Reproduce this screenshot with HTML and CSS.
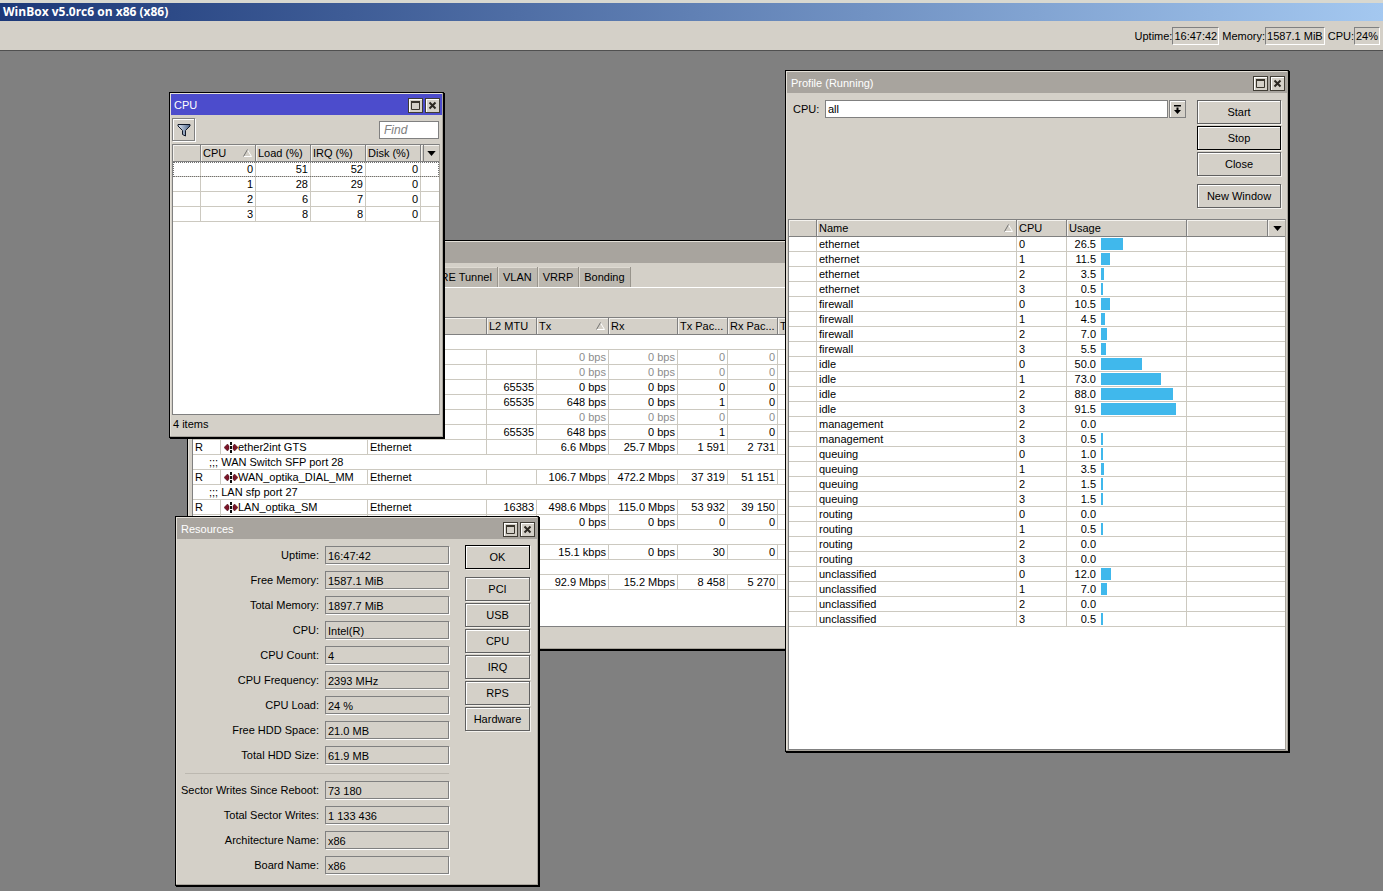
FILE: index.html
```html
<!DOCTYPE html>
<html lang="en">
<head>
<meta charset="utf-8">
<title>WinBox v5.0rc6 on x86 (x86)</title>
<link rel="stylesheet" href="styles.css">
</head>
<body>
<svg class="defs" aria-hidden="true">
  <symbol id="i-max" viewBox="0 0 13 13"><path d="M2.500 3v7.500h8V3z" fill="none" stroke="#38342c"/><path d="M2 2h9v2H2z" fill="#38342c"/></symbol>
  <symbol id="i-close" viewBox="0 0 13 13"><path d="M3.500 3.500l6 6M9.500 3.500l-6 6" stroke="#2c2822" stroke-width="2"/></symbol>
  <symbol id="i-down" viewBox="0 0 10 6"><path d="M0 0h10L5 6z" fill="#000"/></symbol>
  <symbol id="i-sort" viewBox="0 0 9 8"><path d="M4.500 1l4 6.500H.5" stroke="#fff" fill="none"/><path d="M.5 7.500L4.500 .5" stroke="#707070" fill="none"/></symbol>
  <symbol id="i-eth" viewBox="0 0 14 11"><path d="M0 5.500L3.500 2 5 4v3L3.500 9zM14 5.500L10.500 2 9 4v3l1.500 2z" fill="#7c1428" stroke="#3c0810" stroke-width=".5"/><path d="M6 0h2v3H6zM6 4h2v3H6zM6 8h2v3H6z" fill="#111"/></symbol>
</svg>

<header class="titlebar">WinBox v5.0rc6 on x86 (x86)</header>
<div class="toolbar">
  <span class="stat">Uptime:<output class="stat-value">16:47:42</output></span>
  <span class="stat">Memory:<output class="stat-value">1587.1 MiB</output></span>
  <span class="stat">CPU:<output class="stat-value">24%</output></span>
</div>

<main class="desktop">
  <section class="window win-interfaces" aria-label="Interface list">
    <div class="win-title"></div>
    <div class="tabs">
      <button class="tab">GRE Tunnel</button><button class="tab">VLAN</button><button class="tab">VRRP</button><button class="tab">Bonding</button>
    </div>
    <div class="tools"></div>
    <div class="sheet">
      <table class="grid interfaces">
        <colgroup><col class="w28"><col class="w147"><col class="w119"><col class="w50"><col class="w72"><col class="w69"><col class="w50"><col class="w50"><col></colgroup>
        <thead><tr><th></th><th></th><th></th><th>L2 MTU</th><th><div class="sorted">Tx<svg class="sort"><use href="#i-sort"/></svg></div></th><th>Rx</th><th>Tx Pac...</th><th>Rx Pac...</th><th>Tx Drops</th></tr></thead>
        <tbody>
          <tr class="note"><td colspan="9"></td></tr>
          <tr class="off"><td></td><td></td><td></td><td></td><td>0 bps</td><td>0 bps</td><td>0</td><td>0</td><td></td></tr>
          <tr class="off"><td></td><td></td><td></td><td></td><td>0 bps</td><td>0 bps</td><td>0</td><td>0</td><td></td></tr>
          <tr><td></td><td></td><td></td><td>65535</td><td>0 bps</td><td>0 bps</td><td>0</td><td>0</td><td></td></tr>
          <tr><td></td><td></td><td></td><td>65535</td><td>648 bps</td><td>0 bps</td><td>1</td><td>0</td><td></td></tr>
          <tr class="off"><td></td><td></td><td></td><td></td><td>0 bps</td><td>0 bps</td><td>0</td><td>0</td><td></td></tr>
          <tr><td></td><td></td><td></td><td>65535</td><td>648 bps</td><td>0 bps</td><td>1</td><td>0</td><td></td></tr>
          <tr><td>R</td><td><div class="iface"><svg class="eth"><use href="#i-eth"/></svg>ether2int GTS</div></td><td>Ethernet</td><td></td><td>6.6 Mbps</td><td>25.7 Mbps</td><td>1 591</td><td>2 731</td><td></td></tr>
          <tr class="note"><td colspan="9">;;; WAN Switch SFP port 28</td></tr>
          <tr><td>R</td><td><div class="iface"><svg class="eth"><use href="#i-eth"/></svg>WAN_optika_DIAL_MM</div></td><td>Ethernet</td><td></td><td>106.7 Mbps</td><td>472.2 Mbps</td><td>37 319</td><td>51 151</td><td></td></tr>
          <tr class="note"><td colspan="9">;;; LAN sfp port 27</td></tr>
          <tr><td>R</td><td><div class="iface"><svg class="eth"><use href="#i-eth"/></svg>LAN_optika_SM</div></td><td>Ethernet</td><td>16383</td><td>498.6 Mbps</td><td>115.0 Mbps</td><td>53 932</td><td>39 150</td><td></td></tr>
          <tr><td></td><td></td><td></td><td></td><td>0 bps</td><td>0 bps</td><td>0</td><td>0</td><td></td></tr>
          <tr class="note"><td colspan="9"></td></tr>
          <tr><td></td><td></td><td></td><td></td><td>15.1 kbps</td><td>0 bps</td><td>30</td><td>0</td><td></td></tr>
          <tr class="note"><td colspan="9"></td></tr>
          <tr><td></td><td></td><td></td><td></td><td>92.9 Mbps</td><td>15.2 Mbps</td><td>8 458</td><td>5 270</td><td></td></tr>
        </tbody>
      </table>
    </div>
    <div class="status"></div>
  </section>

  <section class="window win-profile" aria-label="Profile">
    <div class="win-title">Profile (Running)
      <span class="win-buttons"><button class="win-button" aria-label="Maximize"><svg><use href="#i-max"/></svg></button><button class="win-button" aria-label="Close window"><svg><use href="#i-close"/></svg></button></span>
    </div>
    <div class="profile-form">
      <label for="cpu-select">CPU:</label>
      <select id="cpu-select" class="combo"><option>all</option></select>
      <button class="combo-button" aria-label="Open CPU list"><svg viewBox="0 0 9 9"><path d="M1 0h7v1.500H1zM3.500 2.500h2V5H8L4.500 9 1 5h2.500z"/></svg></button>
      <div class="actions">
        <button class="btn">Start</button>
        <button class="btn primary">Stop</button>
        <button class="btn">Close</button>
        <button class="btn apart">New Window</button>
      </div>
    </div>
    <div class="sheet">
      <table class="grid profile">
        <colgroup><col class="w28"><col class="w200"><col class="w50"><col class="w120"><col><col class="w17"></colgroup>
        <thead><tr><th></th><th><div class="sorted">Name<svg class="sort"><use href="#i-sort"/></svg></div></th><th>CPU</th><th>Usage</th><th></th><th><button class="menu" aria-label="Columns"><svg><use href="#i-down"/></svg></button></th></tr></thead>
        <tbody id="profile-rows"></tbody>
      </table>
    </div>
  </section>

  <section class="window win-cpu" aria-label="CPU">
    <div class="win-title active">CPU
      <span class="win-buttons"><button class="win-button" aria-label="Maximize"><svg><use href="#i-max"/></svg></button><button class="win-button" aria-label="Close window"><svg><use href="#i-close"/></svg></button></span>
    </div>
    <div class="cpu-tools">
      <button class="filter" aria-label="Filter"><svg viewBox="0 0 14 14"><defs><linearGradient id="fg"><stop offset="0" stop-color="#dfe8f4"/><stop offset="1" stop-color="#4c6488"/></linearGradient></defs><path d="M1 1.500h12v1.500L8.500 7.500V13l-3-1.500v-4L1 3z" fill="url(#fg)" stroke="#101828"/></svg></button>
      <input class="find" type="text" placeholder="Find" aria-label="Find">
    </div>
    <div class="sheet">
      <table class="grid cpus">
        <colgroup><col class="w28"><col class="w55"><col class="w55"><col class="w55"><col class="w55"><col></colgroup>
        <thead><tr><th></th><th><div class="sorted">CPU<svg class="sort"><use href="#i-sort"/></svg></div></th><th>Load (%)</th><th>IRQ (%)</th><th>Disk (%)</th><th><button class="menu" aria-label="Columns"><svg><use href="#i-down"/></svg></button></th></tr></thead>
        <tbody>
          <tr class="focused"><td></td><td>0</td><td>51</td><td>52</td><td>0</td><td></td></tr>
          <tr><td></td><td>1</td><td>28</td><td>29</td><td>0</td><td></td></tr>
          <tr><td></td><td>2</td><td>6</td><td>7</td><td>0</td><td></td></tr>
          <tr><td></td><td>3</td><td>8</td><td>8</td><td>0</td><td></td></tr>
        </tbody>
      </table>
    </div>
    <div class="status">4 items</div>
  </section>

  <section class="window win-resources" aria-label="Resources">
    <div class="win-title">Resources
      <span class="win-buttons"><button class="win-button" aria-label="Maximize"><svg><use href="#i-max"/></svg></button><button class="win-button" aria-label="Close window"><svg><use href="#i-close"/></svg></button></span>
    </div>
    <div class="resources-body">
      <div>
        <div class="fields">
          <label for="r1">Uptime:</label><input id="r1" readonly value="16:47:42">
          <label for="r2">Free Memory:</label><input id="r2" readonly value="1587.1 MiB">
          <label for="r3">Total Memory:</label><input id="r3" readonly value="1897.7 MiB">
          <label for="r4">CPU:</label><input id="r4" readonly value="Intel(R)">
          <label for="r5">CPU Count:</label><input id="r5" readonly value="4">
          <label for="r6">CPU Frequency:</label><input id="r6" readonly value="2393 MHz">
          <label for="r7">CPU Load:</label><input id="r7" readonly value="24 %">
          <label for="r8">Free HDD Space:</label><input id="r8" readonly value="21.0 MB">
          <label for="r9">Total HDD Size:</label><input id="r9" readonly value="61.9 MB">
        </div>
        <hr class="rule">
        <div class="fields">
          <label for="r10">Sector Writes Since Reboot:</label><input id="r10" readonly value="73 180">
          <label for="r11">Total Sector Writes:</label><input id="r11" readonly value="1 133 436">
          <label for="r12">Architecture Name:</label><input id="r12" readonly value="x86">
          <label for="r13">Board Name:</label><input id="r13" readonly value="x86">
        </div>
      </div>
      <div class="actions">
        <button class="btn primary">OK</button>
        <button class="btn apart">PCI</button>
        <button class="btn">USB</button>
        <button class="btn">CPU</button>
        <button class="btn">IRQ</button>
        <button class="btn">RPS</button>
        <button class="btn">Hardware</button>
      </div>
    </div>
  </section>
</main>
<script src="script.js"></script>
</body>
</html>
```
FILE: script.js
```js
const profile = [
  ["ethernet", 0, 26.5], ["ethernet", 1, 11.5], ["ethernet", 2, 3.5], ["ethernet", 3, 0.5],
  ["firewall", 0, 10.5], ["firewall", 1, 4.5], ["firewall", 2, 7], ["firewall", 3, 5.5],
  ["idle", 0, 50], ["idle", 1, 73], ["idle", 2, 88], ["idle", 3, 91.5],
  ["management", 2, 0], ["management", 3, 0.5],
  ["queuing", 0, 1], ["queuing", 1, 3.5], ["queuing", 2, 1.5], ["queuing", 3, 1.5],
  ["routing", 0, 0], ["routing", 1, 0.5], ["routing", 2, 0], ["routing", 3, 0],
  ["unclassified", 0, 12], ["unclassified", 1, 7], ["unclassified", 2, 0], ["unclassified", 3, 0.5]
];

document.getElementById("profile-rows").innerHTML = profile.map(([name, cpu, usage]) => {
  const bar = usage > 0 ? `<span class="bar" style="width:${usage}%"></span>` : "";
  return `<tr><td></td><td>${name}</td><td>${cpu}</td><td><div class="usage"><span class="usage-value">${usage.toFixed(1)}</span><span class="track">${bar}</span></div></td><td colspan="2"></td></tr>`;
}).join("");
```
FILE: styles.css
```css
:root {
  --face: #d4d0c8;
  --edge: #808080;
  --line: #ccc9c0;
}

* { box-sizing: border-box; }

body {
  margin: 0;
  height: 100vh;
  display: flex;
  flex-direction: column;
  overflow: hidden;
  background: #808080;
  color: #000;
  font: 11px/14px "Liberation Sans", Arial, sans-serif;
}

button, input, select { font: inherit; color: inherit; border-radius: 0; margin: 0; }
svg { display: block; }
.defs { position: absolute; width: 0; height: 0; }

.titlebar {
  height: 21px;
  padding-left: 3px;
  border-top: 3px solid #d8d8d0;
  background: linear-gradient(90deg, #1c3878, #a4c8f0);
  color: #fff;
  font: bold 12px/18px "Open Sans", "Noto Sans", sans-serif;
}

.toolbar {
  height: 30px;
  display: flex;
  justify-content: flex-end;
  align-items: center;
  gap: 3px;
  padding-right: 3px;
  background: var(--face);
  border-bottom: 1px solid #505050;
}
.stat { display: flex; align-items: center; }
.stat-value {
  padding: 1px;
  border: 1px solid;
  border-color: var(--edge) #fff #fff var(--edge);
}

.desktop { flex: 1; position: relative; }

.window {
  position: absolute;
  display: flex;
  flex-direction: column;
  padding: 1px;
  border: 1px solid #000;
  background: var(--face);
  box-shadow: inset -1px -1px #a8a49c, inset 1px 1px #e4e0d8, 1px 1px #000;
}
.win-interfaces { left: 187px; top: 189px; width: 640px; height: 410px; }
.win-profile { left: 785px; top: 19px; width: 504px; height: 682px; }
.win-cpu { left: 169px; top: 41px; width: 275px; height: 346px; }
.win-resources { left: 175px; top: 465px; width: 364px; height: 370px; }

.win-title {
  flex: none;
  height: 21px;
  display: flex;
  justify-content: space-between;
  align-items: center;
  padding: 1px 2px 0 4px;
  background: #a8a49e;
  color: #fff;
}
.win-title.active { background: #4c4ccc; padding-left: 3px; }
.win-buttons { display: flex; gap: 2px; }
.win-button {
  width: 15px;
  height: 15px;
  padding: 0;
  border: 1px solid #403c34;
  background: var(--face);
  box-shadow: inset 1px 1px #fff;
}
.win-button svg { width: 13px; height: 13px; }

.btn {
  height: 24px;
  padding: 0;
  border: 1px solid #606060;
  background: var(--face);
  box-shadow: inset 1px 1px #fff, 1px 1px #f4f2ee;
}
.btn.primary { border-color: #000; }
.btn.apart { margin-top: 6px; }
.actions { display: flex; flex-direction: column; gap: 2px; }

.sheet {
  flex: 1;
  min-height: 0;
  margin: 0 1px;
  border: 1px solid var(--edge);
  border-right-color: #a8a49c;
  background: #fff;
  overflow: hidden;
}
.grid { width: 100%; table-layout: fixed; border-collapse: separate; border-spacing: 0; }
.grid th {
  height: 17px;
  padding: 0 0 0 2px;
  border-right: 1px solid var(--edge);
  border-bottom: 1px solid var(--edge);
  background: var(--face);
  box-shadow: inset 1px 1px #f4f2ee;
  font-weight: normal;
  text-align: left;
  white-space: nowrap;
  overflow: hidden;
}
.grid th:last-child { border-right: 0; }
.grid td {
  height: 15px;
  padding: 0 2px;
  border-right: 1px solid var(--line);
  border-bottom: 1px solid var(--line);
  line-height: 14px;
  white-space: nowrap;
}
.grid td:last-child { border-right: 0; }
.sorted { display: flex; justify-content: space-between; align-items: center; padding-right: 3px; }
.sort { width: 9px; height: 8px; }
.w17 { width: 17px; } .w28 { width: 28px; } .w50 { width: 50px; }
.w55 { width: 55px; } .w69 { width: 69px; } .w72 { width: 72px; } .w119 { width: 119px; }
.w120 { width: 120px; } .w147 { width: 147px; } .w200 { width: 200px; }

.menu {
  display: flex;
  align-items: center;
  justify-content: center;
  width: 100%;
  height: 16px;
  padding: 0;
  border: 0;
  background: none;
}
.menu svg { width: 9px; height: 5px; }

.status { flex: none; height: 21px; padding: 2px 2px 0; }

.tabs { display: flex; height: 25px; padding: 4px 0 0 238px; border-bottom: 1px solid #fff; }
.tab {
  padding: 0 5px;
  border: 0;
  border-right: 1px solid #98948c;
  background: #bcb8b0;
  box-shadow: inset 1px 1px #dedad2;
}
.tools { height: 29px; }
.win-interfaces .sheet { margin-left: 3px; }
.interfaces td:nth-child(n+4) { text-align: right; }
.interfaces .note td { padding-left: 16px; border-right: 0; }
.off { color: #8c8c8c; }
.iface { display: flex; align-items: center; padding-left: 1px; }
.eth { width: 14px; height: 11px; }

.profile-form {
  display: flex;
  align-items: flex-start;
  height: 126px;
  padding: 7px 6px 0 6px;
}
.profile-form label { width: 32px; padding-top: 2px; }
.combo {
  flex: 1;
  appearance: none;
  height: 18px;
  padding: 0 2px;
  border: 1px solid var(--edge);
  background: #fff;
}
.combo-button {
  display: flex;
  align-items: center;
  justify-content: center;
  width: 17px;
  height: 18px;
  margin: 0 11px 0 1px;
  padding: 0;
  border: 1px solid var(--edge);
  background: var(--face);
  box-shadow: inset 1px 1px #fff;
}
.combo-button svg { width: 9px; height: 9px; }
.profile-form .actions { width: 84px; }
.usage { display: flex; align-items: center; height: 14px; }
.usage-value { width: 27px; text-align: right; }
.track { width: 82px; margin-left: 5px; }
.bar { display: block; min-width: 2px; height: 12px; background: #40b8ec; }

.cpu-tools {
  display: flex;
  justify-content: space-between;
  align-items: center;
  height: 29px;
  padding: 0 3px 0 1px;
}
.filter {
  display: flex;
  align-items: center;
  justify-content: center;
  width: 23px;
  height: 23px;
  padding: 0;
  border: 1px solid var(--edge);
  background: var(--face);
  box-shadow: inset 1px 1px #fff, 1px 1px #fff;
}
.filter svg { width: 14px; height: 14px; }
.find { width: 60px; height: 18px; padding: 0 4px; border: 1px solid var(--edge); background: #fff; }
.find::placeholder { color: #808080; opacity: 1; font-size: 12px; font-style: italic; }
.win-cpu .sheet { margin-right: 2px; }
.cpus td { text-align: right; }
.cpus th:last-child { padding-left: 2px; }
.cpus .menu { border-left: 1px solid var(--edge); }
.focused { outline: 1px dotted #707070; outline-offset: -1px; }

.resources-body { display: flex; justify-content: space-between; padding: 6px 7px 0 4px; }
.fields {
  display: grid;
  grid-template-columns: 138px 124px;
  grid-auto-rows: 18px;
  gap: 7px 6px;
  padding-top: 1px;
  align-items: center;
}
.fields label { text-align: right; white-space: nowrap; }
.fields input {
  width: 100%;
  height: 18px;
  padding: 1px 2px 0;
  border: 1px solid var(--edge);
  background: var(--face);
  box-shadow: 1px 1px #fff;
}
.rule {
  margin: 9px 0 6px 4px;
  border: 0;
  border-top: 1px solid #bcb8b0;
}
.resources-body .actions { width: 65px; }
```
